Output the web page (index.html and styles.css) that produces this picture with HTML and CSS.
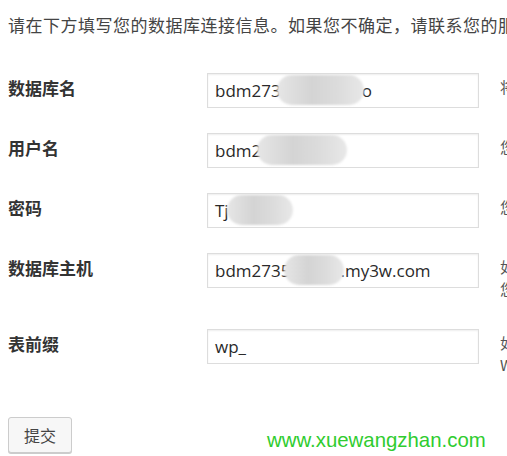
FILE: index.html
```html
<!DOCTYPE html>
<html lang="zh-CN">
<head>
  <meta charset="UTF-8" />
  <title>数据库连接信息</title>
  <link rel="stylesheet" href="styles.css">
</head>
<body>
  <p class="intro">请在下方填写您的数据库连接信息。如果您不确定，请联系您的服务提供商。</p>

  <div class="form-table">
    <div class="row">
      <div class="label">数据库名</div>
      <div class="field">bdm273<span class="blur b1"></span>o</div>
      <div class="desc">将WordPress安装到哪个数据库？</div>
    </div>
    <div class="row">
      <div class="label">用户名</div>
      <div class="field">bdm2<span class="blur b2"></span></div>
      <div class="desc">您的数据库用户名。</div>
    </div>
    <div class="row">
      <div class="label">密码</div>
      <div class="field">Tj<span class="blur b3"></span></div>
      <div class="desc">您的数据库密码。</div>
    </div>
    <div class="row">
      <div class="label">数据库主机</div>
      <div class="field">bdm2735<span class="blur b4"></span>.my3w.com</div>
      <div class="desc">如果localhost不能用，<br>您通常可以从主机服务商处得到正确的信息。</div>
    </div>
    <div class="row">
      <div class="label">表前缀</div>
      <div class="field">wp_</div>
      <div class="desc">如果您希望在同一个数据库安装多个<br>WordPress，请修改前缀。</div>
    </div>
  </div>

  <button class="submit" type="button">提交</button>

  <div class="watermark">www.xuewangzhan.com</div>
</body>
</html>
```

FILE: styles.css
```css
/* BASE */
html, body {
  margin: 0;
  padding: 0;
  background: #fff;
  overflow: hidden;
}

body {
  position: relative;
  width: 507px;
  height: 456px;
  font-family: "Noto Sans CJK SC", "Open Sans", sans-serif;
  color: #333;
}

.intro {
  margin: 0;
  padding: 13px 0 0 8px;
  font-size: 17px;
  line-height: 24px;
  letter-spacing: 0.5px;
  color: #444;
  white-space: nowrap;
}

/* FORM ROWS */
.form-table {
  margin-top: 36px;
}

.row {
  display: flex;
  align-items: flex-start;
  padding-bottom: 25px;
  white-space: nowrap;
}

.label {
  width: 207px;
  flex: 0 0 207px;
  padding: 4px 0 0 8px;
  box-sizing: border-box;
  font-size: 17px;
  line-height: 22px;
  font-weight: bold;
  color: #333;
}

.field {
  flex: 0 0 272px;
  width: 272px;
  height: 35px;
  box-sizing: border-box;
  border: 1px solid #ddd;
  box-shadow: inset 0 1px 2px rgba(0, 0, 0, .07);
  padding: 0 7px;
  font-family: "Open Sans", "Noto Sans CJK SC", sans-serif;
  font-size: 17px;
  line-height: 33px;
  color: #2a2a2a;
  overflow: hidden;
}

.desc {
  padding: 3px 0 4px 21px;
  font-size: 15px;
  line-height: 22px;
  color: #555;
}

/* blurred-out parts of the values */
.blur {
  display: inline-block;
  height: 30px;
  vertical-align: middle;
  margin-top: -4px;
  border-radius: 15px;
  background: linear-gradient(90deg, #e6e6e6, #d4d4d4 40%, #dcdcdc 70%, #e8e8e8);
  filter: blur(1px);
}
.b1 { width: 87px; margin-left: -4px; margin-right: -2px; }
.b2 { width: 90px; margin-left: -4px; }
.b3 { width: 66px; margin-left: -2px; }
.b4 { width: 60px; margin-left: -6px; margin-right: -4px; }

/* BUTTON */
.submit {
  display: block;
  margin: 12px 0 0 8px;
  width: 64px;
  height: 36px;
  border: 1px solid #ccc;
  border-radius: 3px;
  background: #f7f7f7;
  box-shadow: 0 1px 0 #ccc;
  font-family: "Noto Sans CJK SC", sans-serif;
  font-size: 16px;
  color: #444;
  padding: 0;
}

/* watermark laid over the page */
.watermark {
  position: absolute;
  left: 267px;
  top: 428px;
  font-family: "Liberation Sans", Arial, sans-serif;
  font-size: 20.4px;
  line-height: 24px;
  color: #2fcc2f;
}
```
